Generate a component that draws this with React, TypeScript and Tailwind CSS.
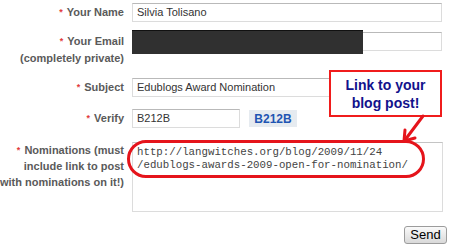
import type { ReactNode } from "react";

const FONT = "font-['Liberation_Sans',Arial,sans-serif]";

function Label({ children }: { children: ReactNode }) {
	return (
		<div className="w-[124px] shrink-0 whitespace-nowrap text-right font-bold text-[11px] leading-[17px] text-[#5a5a5a]">
			{children}
		</div>
	);
}

function Star() {
	return <span className="mr-[4px] text-[#e23b3b] text-[9px] align-top">*</span>;
}

const inputCls =
	"h-[19px] border border-[#dcdcdc] border-t-[#b9b9b9] bg-white pl-[4px] text-[11px] leading-[17px] text-[#333] outline-none";

export default function App() {
	return (
		<div className={`relative h-[249px] w-[450px] overflow-hidden bg-white ${FONT}`}>
			<div className="flex flex-col pt-[3px]">
				{/* name */}
				<div className="flex items-center">
					<Label>
						<Star />
						Your Name
					</Label>
					<div className={`ml-2 w-[310px] ${inputCls}`}>Silvia Tolisano</div>
				</div>

				{/* email */}
				<div className="mt-[11px] flex items-start">
					<Label>
						<Star />
						Your Email
						<br />
						(completely private)
					</Label>
					<div className={`ml-2 mt-[-1px] w-[310px] ${inputCls}`} />
				</div>

				{/* subject */}
				<div className="mt-[11px] flex items-center">
					<Label>
						<Star />
						Subject
					</Label>
					<div className={`ml-2 w-[310px] ${inputCls}`}>Edublogs Award Nomination</div>
				</div>

				{/* verify */}
				<div className="mt-[12px] flex items-center">
					<Label>
						<Star />
						Verify
					</Label>
					<div className={`ml-2 w-[108px] ${inputCls}`}>B212B</div>
					<div className="ml-[9px] flex h-[17px] w-[48px] items-center justify-center bg-[#e6ebf0] font-bold text-[12px] text-[#1f55b3]">
						B212B
					</div>
				</div>

				{/* nominations */}
				<div className="mt-[14px] flex items-start">
					<Label>
						<div className="leading-[16px]">
							<Star />
							Nominations (must
							<br />
							include link to post
							<br />
							with nominations on it!)
						</div>
					</Label>
					<div className="ml-2 h-[70px] w-[311px] border border-[#dcdcdc] border-t-[#c4c4c4] bg-white pl-[4px] pt-[3px] font-['Liberation_Mono','Courier_New',monospace] text-[10.75px] leading-[13px] text-[#444]">
						http://langwitches.org/blog/2009/11/24
						<br />
						/edublogs-awards-2009-open-for-nomination/
					</div>
				</div>

				{/* send */}
				<div className="mt-[14px] flex justify-end pr-[3px]">
					<button
						className="flex h-[18px] w-[43px] items-center justify-center rounded-[3px] border border-[#9c9c9c] bg-gradient-to-b from-[#fafafa] to-[#d9d9d9] text-[13px] text-black"
						type="button"
					>
						Send
					</button>
				</div>
			</div>

			{/* redacted email */}
			<div className="absolute left-[132px] top-[30px] h-[24px] w-[231px] border-t border-t-[#111] bg-[#303030]" />

			{/* red ring round the link */}
			<div className="absolute left-[127px] top-[140px] h-[38px] w-[298px] rounded-full border-[3px] border-[#e5141b]" />

			{/* callout */}
			<div className="absolute left-[329px] top-[70px] flex h-[47px] w-[113px] items-center justify-center border-2 border-[#f01c1c] bg-white text-center font-bold text-[14px] leading-[18px] text-[#12128c]">
				Link to your
				<br />
				blog post!
			</div>

			<svg
				aria-hidden="true"
				className="pointer-events-none absolute left-0 top-0"
				height="249"
				width="450"
			>
				<line stroke="#e5141b" strokeLinecap="round" strokeWidth="3" x1="423" x2="405" y1="116" y2="140" />
				<polyline
					fill="none"
					points="405,130 404,141 415,138"
					stroke="#e5141b"
					strokeLinecap="round"
					strokeLinejoin="round"
					strokeWidth="3"
				/>
			</svg>
		</div>
	);
}
